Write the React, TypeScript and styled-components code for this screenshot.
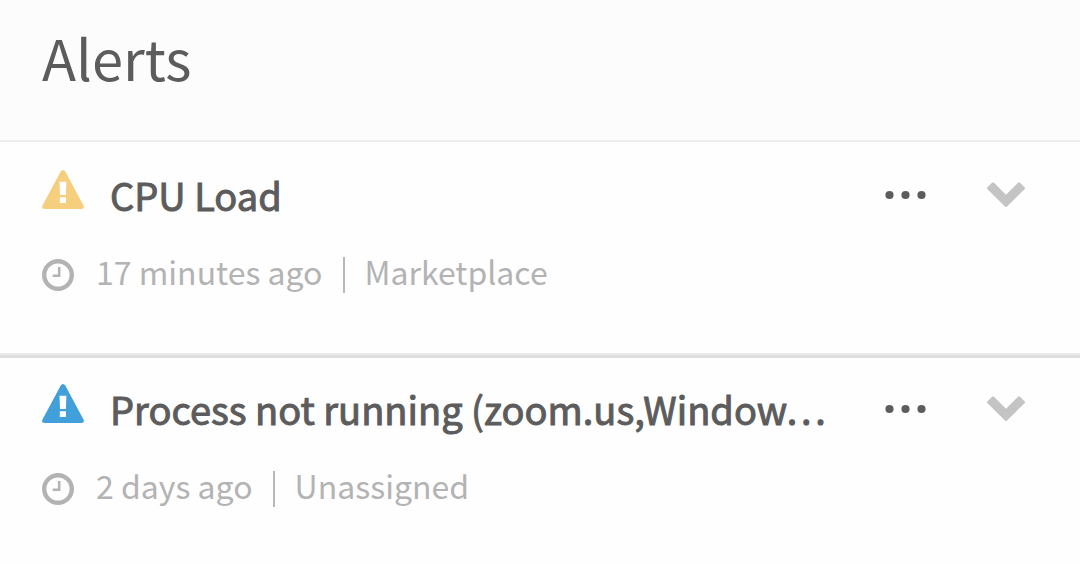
import React from 'react';
import styled, { createGlobalStyle } from 'styled-components';

const GlobalStyle = createGlobalStyle`
  * { box-sizing: border-box; }
  body {
    margin: 0;
    background: #fefefe;
    color: #5c5c5c;
    font-family: "Noto Sans CJK KR", "Noto Sans", sans-serif;
  }
`;

const Header = styled.header`
  padding: 20px 42px 46px;
  background: #fcfcfc;
  border-bottom: 2px solid #ededed;
`;

const PageTitle = styled.h1`
  margin: 0;
  font-size: 56px;
  line-height: 74px;
  font-weight: 400;
`;

const AlertList = styled.ul`
  margin: 0;
  padding: 2px 0 0;
  list-style: none;
`;

const AlertRow = styled.li`
  padding: 26px 54px 0 42px;

  &:not(:last-child) {
    padding-bottom: 52px;
    border-bottom: 3px solid #dedede;
    box-shadow: inset 0 -2px 0 #ececec;
  }
`;

const TopLine = styled.div`
  display: flex;
  align-items: center;
  height: 50px;

  > svg {
    flex: none;
    align-self: flex-start;
  }
`;

const AlertTitle = styled.h2`
  flex: 1;
  min-width: 0;
  margin: 0 0 0 26px;
  font-size: 38px;
  line-height: 56px;
  font-weight: 400;
  -webkit-text-stroke: 1px currentColor;
  white-space: nowrap;
`;

const Actions = styled.div`
  display: flex;
  align-items: center;
  gap: 60px;
`;

const IconButton = styled.button`
  display: flex;
  flex: none;
  margin: 0;
  padding: 0;
  border: 0;
  background: none;
  color: ${(p) => p.color};
  cursor: pointer;
`;

const Meta = styled.div`
  display: flex;
  align-items: center;
  height: 56px;
  margin-top: 27px;
  color: #b3b3b3;
`;

const MetaText = styled.span`
  padding-bottom: 8px;
  font-size: 32px;
  line-height: 48px;
  white-space: nowrap;

  svg + & {
    margin-left: 22px;
  }
`;

const Divider = styled.span`
  width: 2px;
  height: 36px;
  margin: 0 20px;
  background: #b8b8b8;
`;

const WarningIcon = ({ color }: { color: string }) => (
  <svg width="42" height="40" viewBox="0 0 42 40" aria-hidden="true">
    <path
      fill={color}
      fillRule="evenodd"
      d="M18.7 1.6Q21-1.6 23.3 1.6L41.5 35.6Q43 39 39.5 39H2.5Q-1 39 .5 35.6ZM17.5 11.8 18 24.9H23.9L24.4 11.8ZM17.8 27.3V33.1H24V27.3Z"
    />
  </svg>
);

const ClockIcon = () => (
  <svg width="32" height="32" viewBox="0 0 32 32" fill="none" stroke="currentColor" aria-hidden="true">
    <circle cx="16" cy="16" r="13.8" strokeWidth="4.4" />
    <path d="M17.2 8V16.8H10.7" strokeWidth="2.5" />
  </svg>
);

const DotsIcon = () => (
  <svg width="42" height="10" viewBox="0 0 42 10" fill="currentColor" aria-hidden="true">
    <circle cx="5.5" cy="5" r="4.1" />
    <circle cx="21.5" cy="5" r="4.1" />
    <circle cx="37.5" cy="5" r="4.1" />
  </svg>
);

const ChevronIcon = () => (
  <svg width="40" height="26" viewBox="0 0 40 26" fill="currentColor" aria-hidden="true">
    <path d="M6 .8Q7-.2 8 .8L20 12.8 32 .8Q33-.2 34 .8L38.5 5.3Q39.5 6.3 38.5 7.3L21 24.4Q20 25.4 19 24.4L1.5 7.3Q.5 6.3 1.5 5.3Z" />
  </svg>
);

const alerts = [
  { title: 'CPU Load', time: '17 minutes ago', group: 'Marketplace', color: '#f5ce7e' },
  { title: 'Process not running (zoom.us,Window…', time: '2 days ago', group: 'Unassigned', color: '#419fd9' },
];

export default function App() {
  return (
    <>
      <GlobalStyle />
      <Header>
        <PageTitle>Alerts</PageTitle>
      </Header>
      <AlertList>
        {alerts.map((alert) => (
          <AlertRow key={alert.title}>
            <TopLine>
              <WarningIcon color={alert.color} />
              <AlertTitle>{alert.title}</AlertTitle>
              <Actions>
                <IconButton type="button" color="#5c5c5c" aria-label="More actions">
                  <DotsIcon />
                </IconButton>
                <IconButton type="button" color="#c4c4c4" aria-label="Expand">
                  <ChevronIcon />
                </IconButton>
              </Actions>
            </TopLine>
            <Meta>
              <ClockIcon />
              <MetaText>{alert.time}</MetaText>
              <Divider />
              <MetaText>{alert.group}</MetaText>
            </Meta>
          </AlertRow>
        ))}
      </AlertList>
    </>
  );
}
